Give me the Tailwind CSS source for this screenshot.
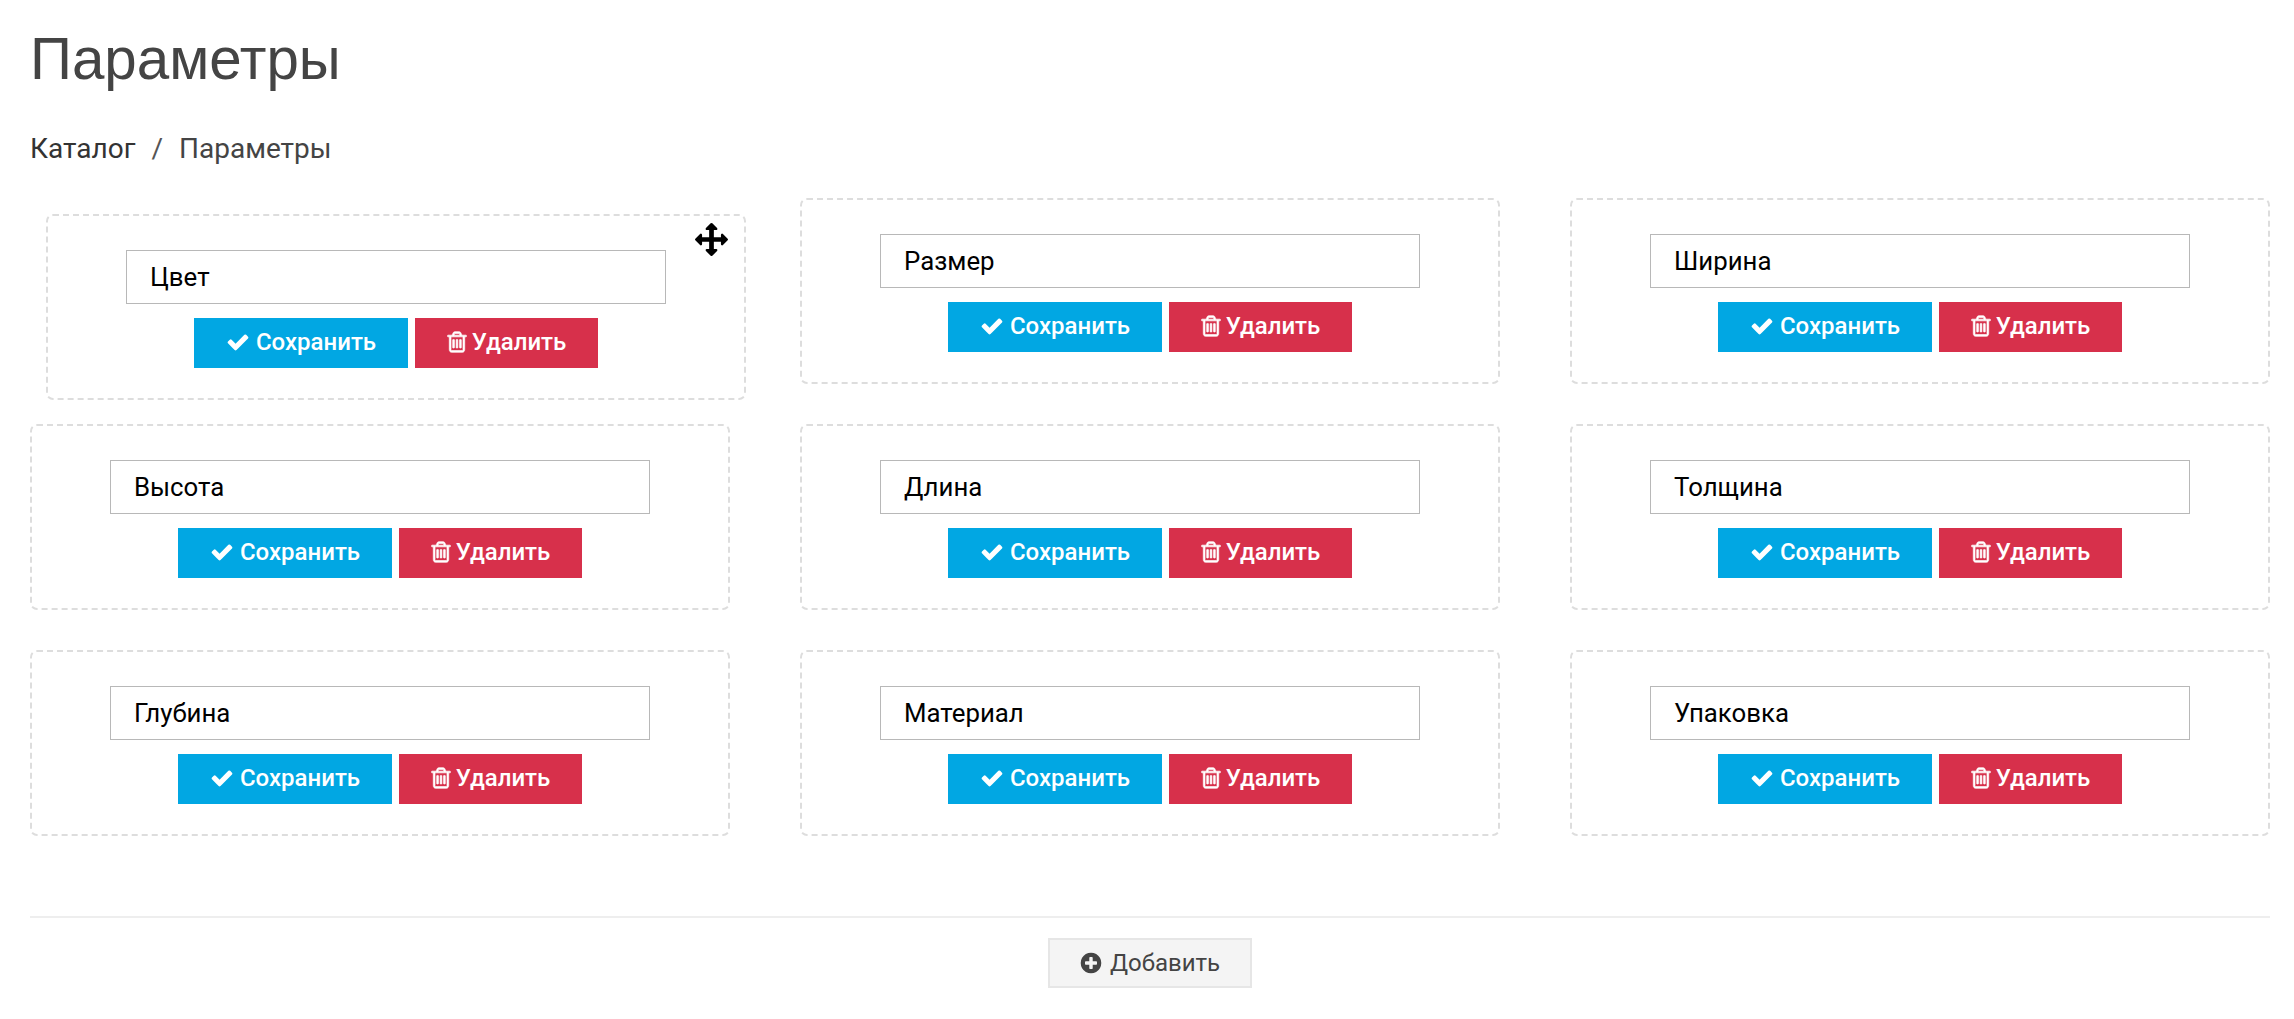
<!DOCTYPE html>
<html lang="ru">
<head>
  <meta charset="UTF-8" />
  <title>Параметры</title>
  <script src="https://cdn.jsdelivr.net/npm/@tailwindcss/browser@4"></script>
</head>
<body class="bg-white font-['Roboto',sans-serif] text-[#333]">
  <svg class="hidden">
    <symbol id="i-check" viewBox="0 0 1792 1792"><path d="M1671 566q0 40-28 68l-724 724-136 136q-28 28-68 28t-68-28l-136-136-362-362q-28-28-28-68t28-68l136-136q28-28 68-28t68 28l294 295 656-657q28-28 68-28t68 28l136 136q28 28 28 68z"/></symbol>
    <symbol id="i-trash" viewBox="0 0 1792 1792"><path d="M704 736v576q0 14-9 23t-23 9h-64q-14 0-23-9t-9-23v-576q0-14 9-23t23-9h64q14 0 23 9t9 23zm256 0v576q0 14-9 23t-23 9h-64q-14 0-23-9t-9-23v-576q0-14 9-23t23-9h64q14 0 23 9t9 23zm256 0v576q0 14-9 23t-23 9h-64q-14 0-23-9t-9-23v-576q0-14 9-23t23-9h64q14 0 23 9t9 23zm128 724v-948h-896v948q0 22 7 40.5t14.5 27 10.5 8.5h832q3 0 10.5-8.5t14.5-27 7-40.5zm-672-1076h448l-48-117q-7-9-17-11h-317q-10 2-17 11zm928 32v64q0 14-9 23t-23 9h-96v948q0 83-47 143.5t-113 60.5h-832q-66 0-113-58.5t-47-141.5v-952h-96q-14 0-23-9t-9-23v-64q0-14 9-23t23-9h309l70-167q15-37 54-63t79-26h320q40 0 79 26t54 63l70 167h309q14 0 23 9t9 23z"/></symbol>
  </svg>

  <div class="pl-[30px] pr-[24px]">
    <!-- Header -->
    <h1 class="pt-[26px] h-[84px] font-['Liberation_Sans',sans-serif] text-[58.3px] leading-[66px] text-[#444]">Параметры</h1>
    <nav class="mt-[48px] h-[34px] text-[28px] leading-[34px] flex gap-[16px]">
      <span class="text-[#333]">Каталог</span>
      <span class="text-[#555]">/</span>
      <span class="text-[#444]">Параметры</span>
    </nav>

    <!-- Cards -->
    <div id="cards" class="mt-[32px] grid grid-cols-[700px_700px_700px] gap-x-[70px] gap-y-[40px]">
    </div>

    <!-- Footer -->
    <div class="mt-[80px] border-t-2 border-[#eeeeee] flex justify-center pt-[20px]">
      <button class="w-[204px] h-[50px] pr-[1px] bg-[#f4f4f4] border-2 border-[#e6e6e6] flex items-center justify-center gap-[7px] text-[24px] text-[#444]">
        <svg class="w-[24px] h-[24px] fill-[#444]" viewBox="0 0 1792 1792"><path d="M1344 960v-128q0-26-19-45t-45-19h-256v-256q0-26-19-45t-45-19h-128q-26 0-45 19t-19 45v256h-256q-26 0-45 19t-19 45v128q0 26 19 45t45 19h256v256q0 26 19 45t45 19h128q26 0 45-19t19-45v-256h256q26 0 45-19t19-45zm320-64q0 209-103 385.5t-279.5 279.5-385.5 103-385.5-103-279.5-279.5-103-385.5 103-385.5 279.5-279.5 385.5-103 385.5 103 279.5 279.5 103 385.5z"/></svg>
        Добавить
      </button>
    </div>
  </div>

  <template id="card">
    <div class="card relative h-[186px] border-2 border-dashed border-[#dddddd] rounded-[7px] flex flex-col items-center pt-[34px]">
      <input class="w-[540px] h-[54px] border border-[#b8b8b8] px-[23px] text-[25.8px] text-black outline-none" />
      <div class="mt-[14px] flex gap-[7px]">
        <button class="w-[214px] h-[50px] pb-[2px] bg-[#01a7e3] text-white text-[24px] font-medium flex items-center justify-center gap-[6px]">
          <svg class="w-[24px] h-[24px] fill-white"><use href="#i-check"/></svg>Сохранить
        </button>
        <button class="w-[183px] h-[50px] pb-[2px] pr-[2px] bg-[#d7304b] text-white text-[24px] font-medium flex items-center justify-center gap-[3px]">
          <svg class="w-[24px] h-[24px] fill-white stroke-white stroke-[50]"><use href="#i-trash"/></svg>Удалить
        </button>
      </div>
    </div>
  </template>

  <script>
    const names = ['Цвет', 'Размер', 'Ширина', 'Высота', 'Длина', 'Толщина', 'Глубина', 'Материал', 'Упаковка'];
    const cards = document.getElementById('cards');
    const tpl = document.getElementById('card');

    names.forEach((name, i) => {
      const node = tpl.content.cloneNode(true);
      const card = node.querySelector('.card');
      node.querySelector('input').setAttribute('value', name);
      if (i === 0) {
        // first card is being dragged
        card.classList.add('translate-x-[16px]', 'translate-y-[16px]');
        card.insertAdjacentHTML('beforeend', '<svg class="absolute top-[7px] right-[16px] w-[33px] h-[33px] fill-black" viewBox="0 0 1792 1792"><path d="M1792 896q0 26-19 45l-256 256q-19 19-45 19t-45-19-19-45v-128h-384v384h128q26 0 45 19t19 45-19 45l-256 256q-19 19-45 19t-45-19l-256-256q-19-19-19-45t19-45 45-19h128v-384h-384v128q0 26-19 45t-45 19-45-19l-256-256q-19-19-19-45t19-45l256-256q19-19 45-19t45 19 19 45v128h384v-384h-128q-26 0-45-19t-19-45 19-45l256-256q19-19 45-19t45 19l256 256q19 19 19 45t-19 45-45 19h-128v384h384v-128q0-26 19-45t45-19 45 19l256 256q19 19 19 45z"/></svg>');
      }
      cards.appendChild(node);
    });
  </script>
</body>
</html>
